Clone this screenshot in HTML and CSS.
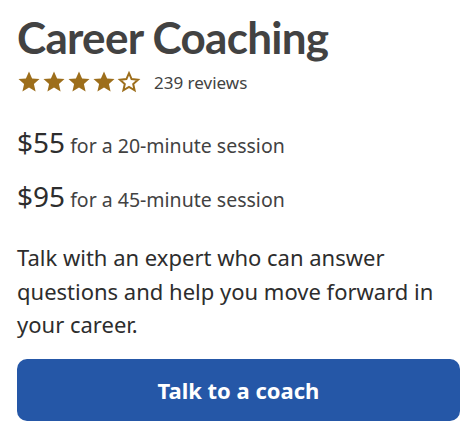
FILE: index.html
```html
<!DOCTYPE html>
<html>
<head>
<meta charset="utf-8">
<link rel="stylesheet" href="styles.css">
</head>
<body>
<div class="card">
  <h1 class="title">Career Coaching</h1>
  <div class="rating">
    <div class="stars">
      <svg class="star" viewBox="0 0 24 24"><path d="M12 1.5l3.1 6.9 7.4.7-5.6 5 1.7 7.4L12 17.6l-6.6 3.9 1.7-7.4-5.6-5 7.4-.7z"/></svg>
      <svg class="star" viewBox="0 0 24 24"><path d="M12 1.5l3.1 6.9 7.4.7-5.6 5 1.7 7.4L12 17.6l-6.6 3.9 1.7-7.4-5.6-5 7.4-.7z"/></svg>
      <svg class="star" viewBox="0 0 24 24"><path d="M12 1.5l3.1 6.9 7.4.7-5.6 5 1.7 7.4L12 17.6l-6.6 3.9 1.7-7.4-5.6-5 7.4-.7z"/></svg>
      <svg class="star" viewBox="0 0 24 24"><path d="M12 1.5l3.1 6.9 7.4.7-5.6 5 1.7 7.4L12 17.6l-6.6 3.9 1.7-7.4-5.6-5 7.4-.7z"/></svg>
      <svg class="star empty" viewBox="0 0 24 24"><path d="M12 3.2l2.6 5.9 6.4.6-4.8 4.3 1.4 6.3L12 17l-5.6 3.3 1.4-6.3L3 9.7l6.4-.6z"/></svg>
    </div>
    <span class="reviews">239 reviews</span>
  </div>
  <p class="price"><span class="amount">$55</span> for a 20-minute session</p>
  <p class="price"><span class="amount">$95</span> for a 45-minute session</p>
  <p class="desc">Talk with an expert who can answer questions and help you move forward in your career.</p>
  <button class="cta">Talk to a coach</button>
</div>
</body>
</html>
```
FILE: styles.css
```css
html, body {
  margin: 0;
  padding: 0;
  background: #ffffff;
}
body {
  font-family: "Noto Sans", sans-serif;
  color: #2d2d2d;
}
.card {
  padding: 9px 14px 0 17px;
  display: flex;
  flex-direction: column;
}
.title {
  margin: 0;
  font-family: Lato, "Noto Sans", sans-serif;
  font-size: 44px;
  font-weight: 700;
  letter-spacing: -0.7px;
  line-height: 56px;
  color: #424242;
}
.rating {
  display: flex;
  align-items: center;
  gap: 13px;
  margin-top: 3px;
  height: 28px;
}
.stars {
  display: flex;
  gap: 1px;
}
.star {
  width: 24px;
  height: 24px;
  fill: #9d6e1b;
}
.star.empty {
  fill: #ffffff;
  stroke: #9d6e1b;
  stroke-width: 2;
  stroke-linejoin: miter;
}
.reviews {
  font-size: 17px;
  color: #424242;
}
.price {
  margin: 0;
  font-size: 19.5px;
  line-height: 36px;
  color: #424242;
}
.price:first-of-type {
  margin-top: 28px;
}
.price + .price {
  margin-top: 14px;
}
.amount {
  font-size: 28px;
  color: #2d2d2d;
}
.desc {
  margin: 23px 0 0 0;
  font-size: 22px;
  line-height: 33.5px;
  color: #2d2d2d;
}
.cta {
  margin-top: 17px;
  height: 62px;
  border: none;
  border-radius: 10px;
  background: #2557a7;
  color: #ffffff;
  font-family: "Noto Sans", sans-serif;
  font-weight: 700;
  font-size: 22px;
}
```
